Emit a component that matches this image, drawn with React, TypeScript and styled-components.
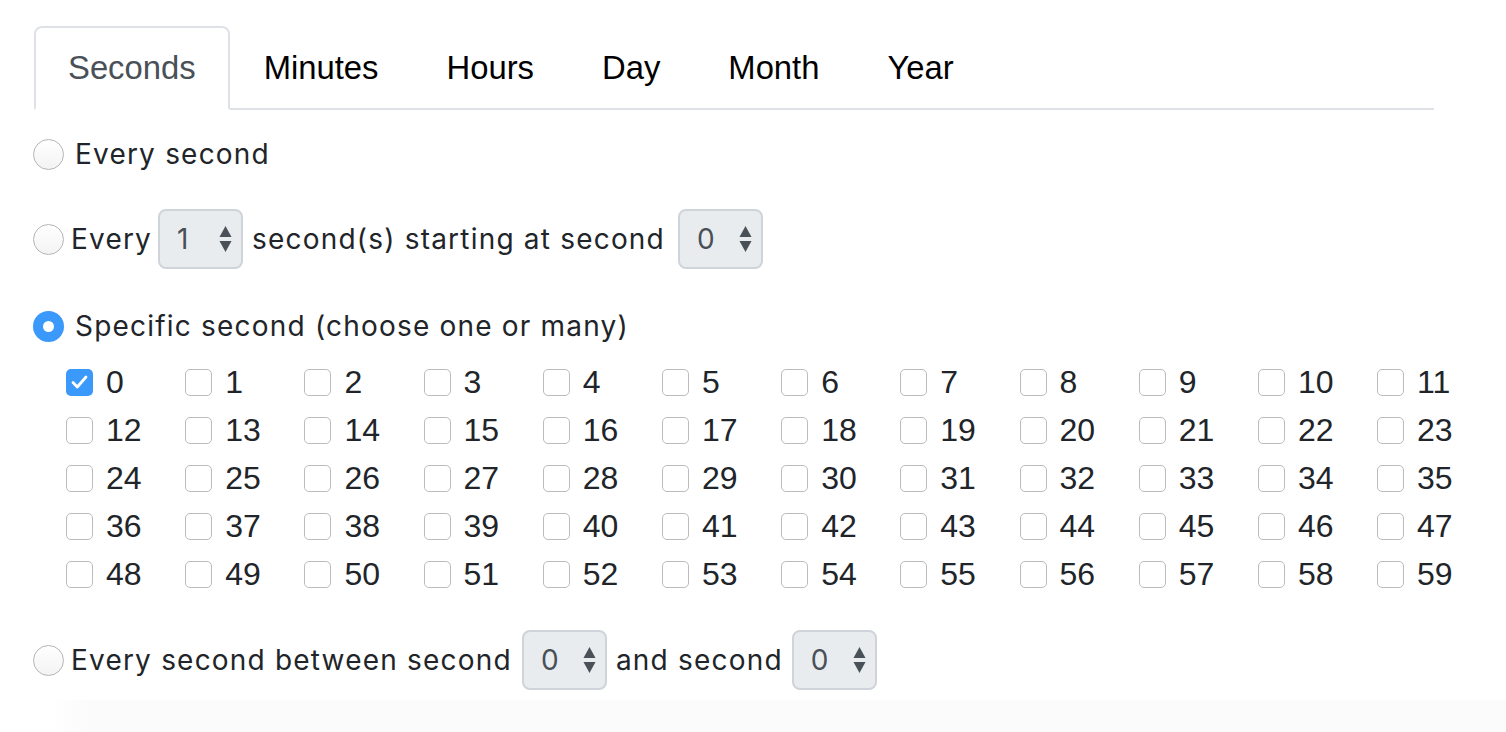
import React from "react";
import styled, { createGlobalStyle } from "styled-components";

const GlobalStyle = createGlobalStyle`
  html, body {
    margin: 0;
    padding: 0;
    background: #ffffff;
  }
  body {
    font-family: Inter, "Liberation Sans", Arial, sans-serif;
    color: #212529;
    overflow: hidden;
  }
`;

const Page = styled.div`
  width: 1506px;
  height: 732px;
  box-sizing: border-box;
  padding: 26px 0 0 33px;
  display: flex;
  flex-direction: column;
  position: relative;
`;

const TabList = styled.ul`
  list-style: none;
  margin: 0 0 0 1px;
  padding: 0;
  width: 1400px;
  display: flex;
  border-bottom: 2px solid #dee2e6;
`;

const Tab = styled.li<{ $active?: boolean }>`
  margin-bottom: -2px;
  padding: 16px 32px;
  line-height: 48px;
  font-family: "Liberation Sans", Arial, sans-serif;
  font-size: 32.8px;
  color: ${(p) => (p.$active ? "#495057" : "#000000")};
  background: ${(p) => (p.$active ? "#ffffff" : "transparent")};
  border: 2px solid ${(p) => (p.$active ? "#dee2e6" : "transparent")};
  border-bottom-color: ${(p) => (p.$active ? "#ffffff" : "transparent")};
  border-radius: 8px 8px 0 0;
`;

const Option = styled.div<{ $top: number }>`
  margin-top: ${(p) => p.$top}px;
  display: flex;
  align-items: center;
  min-height: 48px;
  font-size: 28px;
  letter-spacing: 1.2px;
  line-height: 48px;
`;

const Radio = styled.span<{ $checked?: boolean; $gap: number }>`
  flex: none;
  width: 31px;
  height: 31px;
  box-sizing: border-box;
  border-radius: 50%;
  margin-right: ${(p) => p.$gap}px;
  display: flex;
  align-items: center;
  justify-content: center;
  background: ${(p) =>
    p.$checked ? "#3b99fc" : "linear-gradient(#ffffff, #f3f3f3)"};
  border: ${(p) => (p.$checked ? "none" : "1.5px solid #b5b5b5")};
  &::after {
    content: "";
    display: ${(p) => (p.$checked ? "block" : "none")};
    width: 11px;
    height: 11px;
    border-radius: 50%;
    background: #ffffff;
  }
`;

const Label = styled.span<{ $before?: number; $after?: number }>`
  margin-left: ${(p) => p.$before ?? 0}px;
  margin-right: ${(p) => p.$after ?? 0}px;
  white-space: nowrap;
`;

const SelectBox = styled.div`
  flex: none;
  width: 85px;
  height: 60px;
  box-sizing: border-box;
  border: 2px solid #ced4da;
  border-radius: 8px;
  background: #e9ecef;
  display: flex;
  align-items: center;
  justify-content: space-between;
  padding: 0 9px 0 17px;
  color: #495057;
  font-size: 28px;
  letter-spacing: 0;
`;

const Grid = styled.div`
  margin: 8px 0 0 33px;
  display: grid;
  grid-template-columns: repeat(12, 119.2px);
  grid-auto-rows: 48px;
`;

const CheckItem = styled.label`
  display: flex;
  align-items: center;
  font-family: "Liberation Sans", Arial, sans-serif;
  font-size: 32px;
  line-height: 48px;
  white-space: nowrap;
`;

const Box = styled.span<{ $checked?: boolean }>`
  flex: none;
  width: 27px;
  height: 27px;
  box-sizing: border-box;
  border-radius: 5px;
  margin-right: 13px;
  display: flex;
  align-items: center;
  justify-content: center;
  background: ${(p) => (p.$checked ? "#3b99fc" : "#ffffff")};
  border: ${(p) => (p.$checked ? "none" : "1.5px solid #bcbcbc")};
`;

const Shade = styled.div`
  position: absolute;
  left: 50px;
  right: 0;
  bottom: 0;
  height: 32px;
  background: linear-gradient(90deg, rgba(250, 250, 250, 0) 0, #fbfbfb 40px);
`;

const Arrows = () => (
  <svg width="13" height="26" viewBox="0 0 13 26">
    <path d="M6.5 0 L12.5 11 L0.5 11 Z" fill="#495057" />
    <path d="M0.5 15 L12.5 15 L6.5 26 Z" fill="#495057" />
  </svg>
);

const Select = ({ value }: { value: string }) => (
  <SelectBox>
    <span>{value}</span>
    <Arrows />
  </SelectBox>
);

const Check = () => (
  <svg width="17" height="14" viewBox="0 0 17 14">
    <path
      d="M2 7.5 L6.3 12 L15 2"
      fill="none"
      stroke="#ffffff"
      strokeWidth="2.8"
      strokeLinecap="round"
      strokeLinejoin="round"
    />
  </svg>
);

const tabs = ["Seconds", "Minutes", "Hours", "Day", "Month", "Year"];
const seconds = Array.from({ length: 60 }, (_, i) => i);

export default function App() {
  return (
    <>
      <GlobalStyle />
      <Page>
        <TabList>
          {tabs.map((t, i) => (
            <Tab key={t} $active={i === 0}>
              {t}
            </Tab>
          ))}
        </TabList>

        <Option $top={20}>
          <Radio $gap={11} />
          <Label>Every second</Label>
        </Option>

        <Option $top={31}>
          <Radio $gap={7} />
          <Label $after={6}>Every</Label>
          <Select value="1" />
          <Label $before={9} $after={13}>
            second(s) starting at second
          </Label>
          <Select value="0" />
        </Option>

        <Option $top={33}>
          <Radio $gap={11} $checked />
          <Label>Specific second (choose one or many)</Label>
        </Option>

        <Grid>
          {seconds.map((s) => (
            <CheckItem key={s}>
              <Box $checked={s === 0}>{s === 0 && <Check />}</Box>
              {s}
            </CheckItem>
          ))}
        </Grid>

        <Option $top={32}>
          <Radio $gap={7} />
          <Label $after={10}>Every second between second</Label>
          <Select value="0" />
          <Label $before={9} $after={9}>
            and second
          </Label>
          <Select value="0" />
        </Option>
        <Shade />
      </Page>
    </>
  );
}
